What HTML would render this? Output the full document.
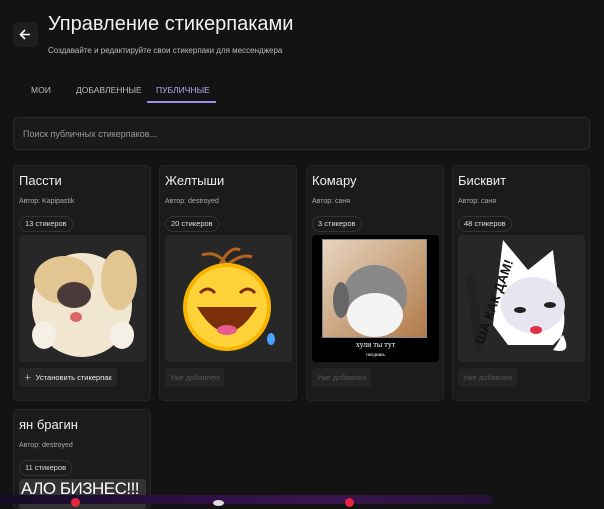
<!DOCTYPE html>
<html><head><meta charset="utf-8"><style>
*{box-sizing:border-box;margin:0;padding:0}
body{width:604px;height:504px;overflow:hidden;background:#131313;font-family:"Liberation Sans",sans-serif;color:#eee;position:relative}
.abs{position:absolute}
.back{left:13px;top:22px;width:25px;height:25px;background:#1e1e1e;border-radius:5px}
h1{position:absolute;left:48px;top:13px;font-size:20px;font-weight:400;color:#f2f2f2}
.sub{left:48px;top:46px;font-size:8px;color:#bbb}
.tab{top:85px;font-size:8.5px;color:#bbb}
.search{position:absolute;left:13px;top:117px;width:577px;height:33px;border:1px solid #2c2c2c;border-radius:5px;background:#1a1a1a;font-size:9px;color:#999;padding:11px 9px}
.card{position:absolute;width:138px;height:236px;background:#1b1b1b;border:1px solid #262626;border-radius:5px}
.card .t{position:absolute;left:5px;top:7px;font-size:13px;color:#eee}
.card .a{position:absolute;left:5px;top:32px;font-size:7px;color:#aaa}
.card .b{position:absolute;left:5px;top:50px;height:16px;padding:0 5px;border:1px solid #333;border-radius:8px;font-size:7.5px;line-height:14px;color:#ddd}
.card .img{position:absolute;left:5px;top:69px;width:127px;height:127px;background:#272727;border-radius:4px;overflow:hidden}
.card .btn{position:absolute;left:5px;top:202px;height:19px;padding:0 5px;background:#242424;border-radius:4px;font-size:7.5px;line-height:19px;color:#555}
</style></head><body>
<div class="abs back"><svg width="25" height="25" viewBox="0 0 25 25"><path d="M17 12.5H8M12 8l-4.5 4.5L12 17" stroke="#fff" stroke-width="1.6" fill="none"/></svg></div>
<h1>Управление стикерпаками</h1>
<div class="abs sub">Создавайте и редактируйте свои стикерпаки для мессенджера</div>
<div class="abs tab" style="left:31px">МОИ</div>
<div class="abs tab" style="left:76px">ДОБАВЛЕННЫЕ</div>
<div class="abs tab" style="left:156px;color:#b9a5f0">ПУБЛИЧНЫЕ</div>
<div class="abs" style="left:147px;top:101px;width:69px;height:2px;background:#a48ce8"></div>
<div class="search">Поиск публичных стикерпаков...</div>

<div class="card" style="left:13px;top:165px"><div class="t">Пассти</div><div class="a">Автор: Kapipastik</div><div class="b">13 стикеров</div>
<div class="img"><svg width="127" height="127"><ellipse cx="63" cy="70" rx="50" ry="52" fill="#f1e6cf"/><ellipse cx="45" cy="45" rx="30" ry="24" fill="#e3c592"/><ellipse cx="100" cy="45" rx="18" ry="30" fill="#e3c592"/><ellipse cx="55" cy="60" rx="17" ry="13" fill="#4a3a3a"/><ellipse cx="57" cy="82" rx="6" ry="5" fill="#d66"/><ellipse cx="25" cy="100" rx="12" ry="14" fill="#f5f0e5"/><ellipse cx="103" cy="100" rx="12" ry="14" fill="#f5f0e5"/></svg></div>
<div class="btn" style="color:#eee;background:#262626">＋&nbsp; Установить стикерпак</div></div>

<div class="card" style="left:159px;top:165px"><div class="t">Желтыши</div><div class="a">Автор: destroyed</div><div class="b">20 стикеров</div>
<div class="img"><svg width="127" height="127"><path d="M55 30q10-20 20-15M62 30q-10-15-25-10M62 30q15-12 25-8" stroke="#b5651d" stroke-width="3" fill="none"/><circle cx="62" cy="72" r="44" fill="#f7b500"/><circle cx="62" cy="72" r="40" fill="#ffd23a"/><path d="M32 72q30 50 60 0z" fill="#7a2e0a"/><ellipse cx="62" cy="95" rx="10" ry="5" fill="#e75b8f"/><path d="M35 58q8-8 15 0M75 58q8-8 15 0" stroke="#7a2e0a" stroke-width="3" fill="none"/><ellipse cx="106" cy="104" rx="4" ry="6" fill="#4aa3ff"/></svg></div>
<div class="btn">Уже добавлен</div></div>

<div class="card" style="left:306px;top:165px"><div class="t">Комару</div><div class="a">Автор: саня</div><div class="b">3 стикеров</div>
<div class="img" style="background:#000"><div style="position:absolute;left:10px;top:4px;width:105px;height:99px;background:linear-gradient(135deg,#e8d5c0,#b07a48);border:1px solid #888"><svg width="105" height="99"><ellipse cx="52" cy="55" rx="32" ry="30" fill="#888"/><ellipse cx="52" cy="75" rx="28" ry="22" fill="#f4f4f4"/><ellipse cx="18" cy="60" rx="8" ry="18" fill="#666"/></svg></div><div style="position:absolute;top:105px;width:127px;text-align:center;font-family:'Liberation Serif',serif;font-size:8px;color:#fff">хули ты тут<br><span style="font-size:5px">пиздишь</span></div></div>
<div class="btn">Уже добавлен</div></div>

<div class="card" style="left:452px;top:165px"><div class="t">Бисквит</div><div class="a">Автор: саня</div><div class="b">48 стикеров</div>
<div class="img"><svg width="127" height="127"><path d="M40 45L45 5 70 35 95 15 100 60q15 30 -5 55 20 5 10-15 L95 110 50 110 35 90z" fill="#fff"/><ellipse cx="75" cy="70" rx="32" ry="28" fill="#e5e6f0"/><path d="M22 115L12 40" stroke="#222" stroke-width="9"/><text x="0" y="0" transform="translate(25,110) rotate(-70)" font-size="13" font-weight="700" fill="#111" font-family="Liberation Sans">ША КАК ДАМ!</text><ellipse cx="62" cy="75" rx="6" ry="3" fill="#222"/><ellipse cx="92" cy="70" rx="6" ry="3" fill="#222"/><ellipse cx="78" cy="95" rx="6" ry="4" fill="#d34"/></svg></div>
<div class="btn">Уже добавлен</div></div>

<div class="card" style="left:13px;top:409px;height:100px"><div class="t">ян брагин</div><div class="a">Автор: destroyed</div><div class="b">11 стикеров</div>
<div class="img" style="background:#333;height:30px"><div style="position:absolute;left:2px;top:0;font-size:17px;color:#fff;letter-spacing:-0.5px">АЛО БИЗНЕС!!!</div></div></div>

<div class="abs" style="left:0;top:495px;width:493px;height:9px;background:linear-gradient(90deg,#150b24,#2d0f45 40%,#3a1450 65%,#251236);border-radius:0 6px 0 0"></div>
<div class="abs" style="left:71px;top:498px;width:9px;height:9px;border-radius:50%;background:#e3263a"></div>
<div class="abs" style="left:345px;top:498px;width:9px;height:9px;border-radius:50%;background:#e3263a"></div>
<div class="abs" style="left:213px;top:500px;width:11px;height:6px;border-radius:50%;background:#ddd"></div>
</body></html>
